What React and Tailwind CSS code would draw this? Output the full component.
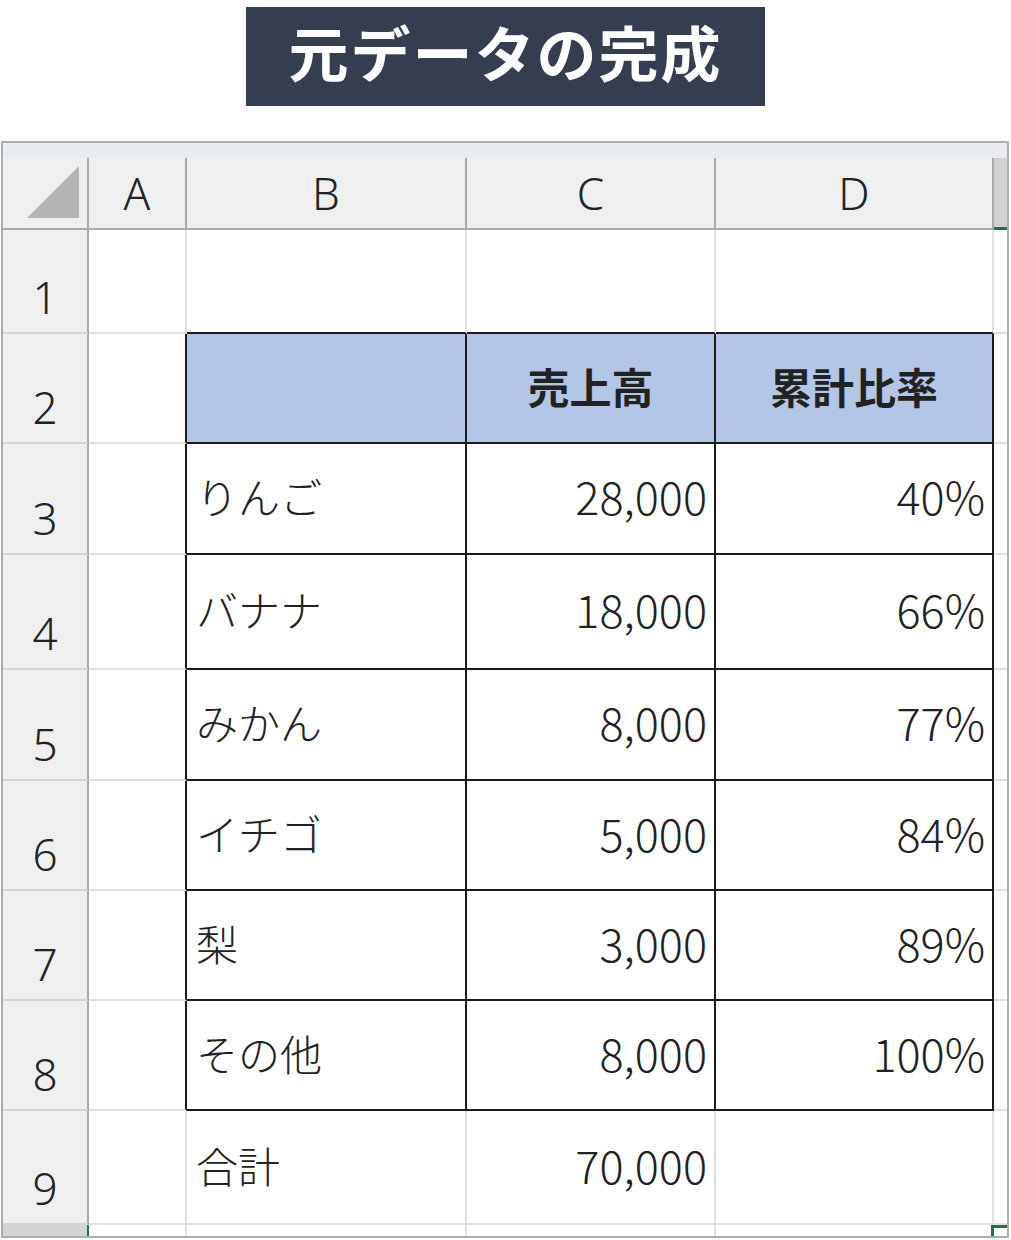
const rows = [
  { h: "h-[104px]", n: "1", kind: "empty" },
  { h: "h-[110px]", n: "2", kind: "head" },
  { h: "h-[111px]", n: "3", b: "りんご", c: "28,000", d: "40%" },
  { h: "h-[115px]", n: "4", b: "バナナ", c: "18,000", d: "66%" },
  { h: "h-[111px]", n: "5", b: "みかん", c: "8,000", d: "77%" },
  { h: "h-[110px]", n: "6", b: "イチゴ", c: "5,000", d: "84%" },
  { h: "h-[110px]", n: "7", b: "梨", c: "3,000", d: "89%" },
  { h: "h-[110px]", n: "8", b: "その他", c: "8,000", d: "100%" },
  { h: "h-[114px]", n: "9", b: "合計", c: "70,000", d: "", kind: "total" },
];

const grid = "grid grid-cols-[86px_98px_280px_249px_278px_13px]";
const jp = "font-['Noto_Sans_CJK_JP',sans-serif] leading-none text-[#222]";

function Row({ r }) {
  const inTable = r.kind !== "empty" && r.kind !== "total";
  const bottom = inTable || r.kind === "empty" ? "border-b-[#1c1c1c]" : "border-b-[#e0e0e0]";
  const right = inTable ? "border-r-[#1c1c1c]" : "border-r-[#e0e0e0]";
  const head = r.kind === "head";
  const fill = head ? "bg-[#b4c6e7]" : "bg-white";
  const num = head
    ? "justify-center text-[42px] font-bold pb-[5px]"
    : "justify-end text-[45px] font-light pb-[6px]";

  return (
    <div className={`${grid} ${r.h}`}>
      <div className="flex items-end justify-center border-r-2 border-b-2 border-r-[#a9a9a9] border-b-[#d4d4d4] bg-[#efefef] pb-[13px] font-['Noto_Sans',sans-serif] text-[44px] font-light leading-none text-[#222]">
        {r.n}
      </div>
      <div className={`border-r-2 border-b-2 border-b-[#e0e0e0] ${right}`} />
      <div className={`flex items-center border-r-2 border-b-2 px-[9px] pb-[5px] text-[42px] font-light ${bottom} ${right} ${fill} ${jp}`}>
        {r.b}
      </div>
      <div className={`flex items-center border-r-2 border-b-2 px-[7px] ${bottom} ${right} ${fill} ${jp} ${num}`}>
        {head ? "売上高" : r.c}
      </div>
      <div className={`flex items-center border-r-2 border-b-2 px-[7px] ${bottom} ${right} ${fill} ${jp} ${num}`}>
        {head ? "累計比率" : r.d}
      </div>
      <div className="border-b-2 border-b-[#e0e0e0]" />
    </div>
  );
}

export default function App() {
  const letters = ["A", "B", "C", "D"];

  return (
    <div className="min-h-screen bg-white pt-[7px]">
      <div className="mx-auto flex h-[99px] w-[519px] items-center justify-center bg-[#343e50] pb-[12px] font-['Noto_Sans_CJK_JP',sans-serif] text-[60px] font-bold leading-none tracking-[2px] text-white">
        元データの完成
      </div>

      <div className="ml-[1px] mt-[35px] w-[1008px] border-2 border-[#adadad]">
        <div className="h-[15px] bg-[#e8ecf0]" />

        <div className={`${grid} h-[72px] bg-[#efefef]`}>
          <div className="flex items-end justify-end border-r-2 border-b-2 border-[#a9a9a9] pb-[8px] pr-[6px]">
            <svg width="56" height="54" viewBox="0 0 56 54">
              <polygon points="2,52 54,52 54,0" fill="#b4b4b4" />
            </svg>
          </div>
          {letters.map((l) => (
            <div
              key={l}
              className="flex items-center justify-center border-r-2 border-b-2 border-[#a9a9a9] font-['Noto_Sans',sans-serif] text-[44px] font-light leading-none text-[#222]"
            >
              {l}
            </div>
          ))}
          <div className="border-b-[3px] border-b-[#217346] bg-[#d2d2d2]" />
        </div>

        {rows.map((r) => (
          <Row key={r.n} r={r} />
        ))}

        <div className={`${grid} h-[11px]`}>
          <div className="border-r-2 border-r-[#217346] bg-[#d4d4d4]" />
          <div className="border-r-2 border-r-[#e0e0e0]" />
          <div className="border-r-2 border-r-[#e0e0e0]" />
          <div className="border-r-2 border-r-[#e0e0e0]" />
          <div className="border-r-[3px] border-r-[#217346]" />
          <div className="border-t-[3px] border-t-[#217346]" />
        </div>
      </div>
    </div>
  );
}
